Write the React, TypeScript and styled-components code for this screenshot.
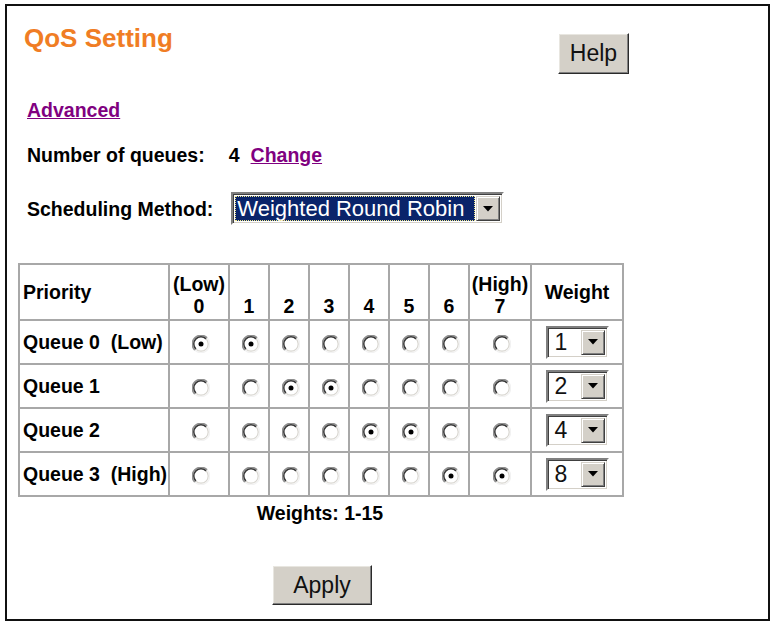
import React from 'react';
import styled, {createGlobalStyle} from 'styled-components';

const GlobalStyle = createGlobalStyle`
  html, body {
    margin: 0;
    padding: 0;
    background: #fff;
  }
  body {
    font-family: "Liberation Sans", Arial, sans-serif;
    color: #000;
  }
  #root {
    padding: 4px 0 0 5px;
  }
`;

const Frame = styled.div`
  box-sizing: border-box;
  width: 765px;
  height: 617px;
  border: 2px solid #111;
  padding: 15px 0 0 20px;
  display: flex;
  flex-direction: column;
  align-items: flex-start;
`;

const Header = styled.div`
  width: 602px;
  display: flex;
  justify-content: space-between;
  align-items: flex-start;
`;

const Title = styled.div`
  margin-left: -3px;
  margin-top: 2px;
  font-size: 26px;
  line-height: 30px;
  font-weight: bold;
  color: #f07d24;
`;

const WinButton = styled.button<{$w: number; $h: number}>`
  box-sizing: border-box;
  width: ${p => p.$w}px;
  height: ${p => p.$h}px;
  padding: 0;
  background: #d4d0c8;
  border: 1px solid;
  border-color: #fff #2a2a2a #2a2a2a #fff;
  box-shadow: inset -1px -1px #808080, inset 1px 1px #e8e6e0;
  font-family: "Liberation Sans", Arial, sans-serif;
  font-size: 23px;
  color: #111;
`;

const HelpButton = styled(WinButton)`
  margin-top: 12px;
`;

const Line = styled.div<{$top: number}>`
  margin-top: ${p => p.$top}px;
  display: flex;
  align-items: center;
  font-size: 19.5px;
  line-height: 22px;
  font-weight: bold;
`;

const Link = styled.a`
  color: #800080;
  text-decoration: underline;
  cursor: pointer;
`;

const Value = styled.span<{$left: number}>`
  margin-left: ${p => p.$left}px;
`;

const FakeSelect = styled.div<{$w: number}>`
  box-sizing: border-box;
  width: ${p => p.$w}px;
  height: 33px;
  display: flex;
  background: #fff;
  border: 2px solid;
  border-color: #808080 #fff #fff #808080;
  box-shadow: inset 1px 1px #404040, inset -1px -1px #d4d0c8;
  padding: 2px;
  font-family: "Liberation Sans", Arial, sans-serif;
  font-weight: normal;
`;

const SelectText = styled.div<{$active?: boolean}>`
  flex: 1;
  display: flex;
  align-items: center;
  padding-left: ${p => (p.$active ? 2 : 5)}px;
  font-size: ${p => (p.$active ? 22 : 23)}px;
  line-height: 25px;
  color: ${p => (p.$active ? '#fff' : '#111')};
  background: ${p => (p.$active ? '#0a246a' : '#fff')};
  outline: ${p => (p.$active ? '1px dotted #f2e98a' : 'none')};
  outline-offset: -1px;
  white-space: nowrap;
  overflow: hidden;
`;

const ArrowButton = styled.div`
  box-sizing: border-box;
  width: 24px;
  margin-left: 1px;
  display: flex;
  align-items: center;
  justify-content: center;
  background: #d4d0c8;
  border: 1px solid;
  border-color: #d4d0c8 #404040 #404040 #d4d0c8;
  box-shadow: inset 1px 1px #fff, inset -1px -1px #808080;
`;

const SchedSelect = styled(FakeSelect)`
  margin-left: 18px;
`;

const Table = styled.table`
  margin-top: 38px;
  margin-left: -9px;
  width: 604px;
  table-layout: fixed;
  border-collapse: separate;
  border-spacing: 0;
  border: 1px solid #a8a8a8;
  font-size: 19.5px;
  line-height: 22px;
  font-weight: bold;
`;

const HeadRow = styled.tr`
  height: 56px;
`;

const BodyRow = styled.tr`
  height: 44px;
`;

const Cell = styled.td<{$w?: number; $align?: string; $valign?: string}>`
  box-sizing: border-box;
  ${p => (p.$w ? `width: ${p.$w}px;` : '')}
  border: 1px solid #a8a8a8;
  padding: 0 0 ${p => (p.$valign === 'bottom' ? 2 : 0)}px ${p => (p.$align === 'left' ? 3 : 0)}px;
  text-align: ${p => p.$align || 'center'};
  vertical-align: ${p => p.$valign || 'middle'};
  white-space: nowrap;
`;

const RadioWrap = styled.span`
  display: inline-flex;
  vertical-align: middle;
  margin-left: 3px;
`;

const Caption = styled.div`
  margin-left: -9px;
  width: 604px;
  margin-top: 5px;
  text-align: center;
  font-size: 19.5px;
  line-height: 22px;
  font-weight: bold;
`;

const Footer = styled.div`
  margin-left: -9px;
  width: 608px;
  margin-top: 41px;
  display: flex;
  justify-content: center;
`;

function Radio({checked}: {checked: boolean}) {
  return (
    <RadioWrap>
      <svg width="18" height="18" viewBox="0 0 18 18">
        <circle cx="9" cy="9" r="7" fill="#fff"/>
        <path d="M2.8 15.2 A8.2 8.2 0 0 1 15.2 2.8" fill="none" stroke="#909090" strokeWidth="1.5"/>
        <path d="M15.2 2.8 A8.2 8.2 0 0 1 2.8 15.2" fill="none" stroke="#f2f2f2" strokeWidth="1.2"/>
        <path d="M3.9 14.1 A6.8 6.8 0 0 1 14.1 3.9" fill="none" stroke="#383838" strokeWidth="1.5"/>
        <path d="M14.1 3.9 A6.8 6.8 0 0 1 3.9 14.1" fill="none" stroke="#d8d6d0" strokeWidth="1.2"/>
        {checked && <circle cx="9" cy="9" r="2.5" fill="#000"/>}
      </svg>
    </RadioWrap>
  );
}

function Arrow() {
  return (
    <svg width="10" height="6" viewBox="0 0 10 6">
      <path d="M0 0 H10 L5 5.5 Z" fill="#000"/>
    </svg>
  );
}

const queues = [
  {label: 'Queue 0\u00a0\u00a0(Low)', checked: [0, 1], weight: 1},
  {label: 'Queue 1', checked: [2, 3], weight: 2},
  {label: 'Queue 2', checked: [4, 5], weight: 4},
  {label: 'Queue 3\u00a0\u00a0(High)', checked: [6, 7], weight: 8},
];

const priorityCols: {top?: string; num: string; w: number}[] = [
  {top: '(Low)', num: '0', w: 60},
  {num: '1', w: 40},
  {num: '2', w: 40},
  {num: '3', w: 40},
  {num: '4', w: 40},
  {num: '5', w: 40},
  {num: '6', w: 40},
  {top: '(High)', num: '7', w: 62},
];

export default function App() {
  return (
    <>
      <GlobalStyle/>
      <Frame>
        <Header>
          <Title>QoS Setting</Title>
          <HelpButton $w={71} $h={41}>Help</HelpButton>
        </Header>

        <Line $top={25}>
          <Link>Advanced</Link>
        </Line>

        <Line $top={23}>
          <span>Number of queues:</span>
          <Value $left={24}>4</Value>
          <Value $left={11}><Link>Change</Link></Value>
        </Line>

        <Line $top={26}>
          <span>Scheduling Method:</span>
          <SchedSelect $w={273}>
            <SelectText $active>Weighted Round Robin</SelectText>
            <ArrowButton><Arrow/></ArrowButton>
          </SchedSelect>
        </Line>

        <Table>
          <thead>
            <HeadRow>
              <Cell as="th" $w={150} $align="left">Priority</Cell>
              {priorityCols.map(c => (
                <Cell as="th" key={c.num} $w={c.w} $valign="bottom">
                  {c.top && <>{c.top}<br/></>}
                  {c.num}
                </Cell>
              ))}
              <Cell as="th" $w={92}>Weight</Cell>
            </HeadRow>
          </thead>
          <tbody>
            {queues.map(q => (
              <BodyRow key={q.label}>
                <Cell $align="left">{q.label}</Cell>
                {priorityCols.map((c, i) => (
                  <Cell key={c.num}>
                    <Radio checked={q.checked.includes(i)}/>
                  </Cell>
                ))}
                <Cell>
                  <FakeSelect $w={63} style={{margin: '0 auto'}}>
                    <SelectText>{q.weight}</SelectText>
                    <ArrowButton><Arrow/></ArrowButton>
                  </FakeSelect>
                </Cell>
              </BodyRow>
            ))}
          </tbody>
        </Table>

        <Caption>Weights: 1-15</Caption>

        <Footer>
          <WinButton $w={100} $h={40}>Apply</WinButton>
        </Footer>
      </Frame>
    </>
  );
}
